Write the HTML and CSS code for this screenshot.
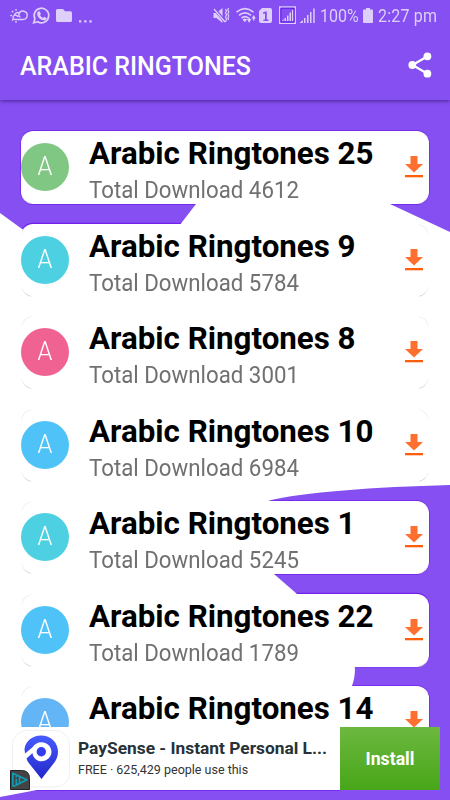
FILE: index.html
```html
<!DOCTYPE html>
<html lang="en">
<head>
<meta charset="utf-8">
<title>Arabic Ringtones</title>
<link rel="stylesheet" href="styles.css">
</head>
<body>
<svg class="symbols" width="0" height="0">
  <symbol id="download" viewBox="0 0 18 22"><path fill="#ff7030" d="M5.500 0h7v8H18l-9 8.500L0 8h5.500z"/><path fill="#ff5f0a" d="M0 19h18v2.300H0z"/></symbol>
</svg>
<div class="screen">
  <svg class="backdrop" viewBox="0 0 450 800">
    <g fill="none" stroke="#7420ec" stroke-width="1.300"><rect x="21" y="131" width="408" height="73" rx="12"/><rect x="21" y="223.500" width="408" height="73" rx="12"/><rect x="21" y="501" width="408" height="73" rx="12"/><rect x="21" y="593.500" width="408" height="73" rx="12"/><rect x="21" y="686" width="408" height="73" rx="12"/><path d="M30 790h310"/></g>
    <path fill="#fff" d="M0 213L22 229 60 257H153L181 223.500 196 204 220 174H330L390 204 450 232V485C375 487 302 492 268 501L240 540 274 574 297 594 340 630C353 648 359 667 352 686L340 740V789L37 790 0 797Z"/>
  </svg>
  <header class="top">
    <div class="status">
      <svg class="status-left" viewBox="0 0 100 32" fill="none" stroke="#ddcffa" stroke-width="1.400">
        <path d="M14.500 15.500a3 3 0 0 1 5-2.200M14.500 19.500h8.500a4.200 4.200 0 1 0-4-5.600c-.5 1.500 0 3 1.500 3.200M14.500 19.500a2.200 2.200 0 0 1 0-4.200c1.700-.5 3 .5 3.500 1.800"/>
        <path stroke-width="1.700" stroke-linecap="round" d="M11 15.500h.2M12.500 11.500l.1.100M16 9.800v.1M12.500 20l.1-.1M16 21.800v.1"/>
        <path stroke-width="1.700" d="M33.700 22.800l1.200-4A7.300 7.300 0 1 1 37.700 21.800z"/>
        <path fill="#ddcffa" stroke="none" d="M38.200 11.400l1.500-.2 1.200 2.700-.9 1.200c.7 1.400 1.600 2.200 3 2.800l1.100-1.200 2.500 1.200c0 2-1.500 2.800-3.200 2.400-3.300-.7-6.300-3.600-6.300-6.600 0-1 .4-1.800 1.100-2.300z"/>
        <path fill="#ddcffa" stroke="none" d="M57.500 9H63l2 2.300h5.500q1.500 0 1.500 1.500v7.700q0 1.500-1.500 1.500h-13q-1.500 0-1.500-1.500v-10Q56 9 57.500 9zM79 20.200h2.300v2.300H79zM84.200 20.200h2.300v2.300h-2.300zM89.400 20.200h2.300v2.300h-2.300z"/>
      </svg>
      <svg class="status-mid" viewBox="210 0 106 32" fill="#ddcffa">
        <path d="M213.500 13h3l6-5v15l-6-5h-3z"/><path d="M214 8.500l11 13" stroke="#854ff1" stroke-width="3"/><path d="M214 9l11 13" stroke="#ddcffa" stroke-width="1.300"/>
        <path fill="none" stroke="#ddcffa" stroke-width="1.200" d="M225.500 9l1 2-1 2 1 2-1 2 1 2-1 3M228.500 8l-.7 2 1 2-1 2 1 2-1 2 1 2"/>
        <path fill="none" stroke="#ddcffa" stroke-width="1.700" d="M236.500 12.200q8.500-7 17 0M239 15.400q6-5 12 0M241.500 18.200q3.500-3 7 0"/>
        <path d="M242.500 19.500q2.500-2 4.500 0l-2.200 2.700zM247 19h1.500v-1.500h1.300V19h1.500l-2.200 4zM251.500 18.500l2.200-3.500 2.200 3.500h-1.500v2h-1.400v-2z"/>
        <path fill-rule="evenodd" d="M262 8h8q2 0 2 2v11q0 2-2 2h-9q-2 0-2-2V11zM263.200 12.300v1.600l1.800-.3v6h-1.600v1.400h5v-1.400h-1.600v-8.200h-1.400z"/>
        <path fill="none" stroke="#ddcffa" stroke-width="1.300" d="M279.700 7h15.600v16.300h-15.600z"/><path fill="none" stroke="#6315ea" d="M280.900 8.200h13.200v13.900h-13.200z"/>
        <path d="M282 21h1.500v-2zM284.500 18h1.500v3h-1.500zM287 15.500h1.500V21H287zM289.500 12.500h1.500V21h-1.500zM292 10h1.200v11H292zM299.500 23h3.300v-3zM304 18h1.500v5H304zM307 15h1.500v8H307zM310 12h1.500v11H310zM313.200 8.500h1.500V23h-1.500z"/>
      </svg>
      <span class="percent">100%</span>
      <svg class="battery" viewBox="0 0 10 15"><path fill="#ddcffa" d="M3 0h4v1.500h2q1 0 1 1V14q0 1-1 1H1q-1 0-1-1V2.500q0-1 1-1h2z"/></svg>
      <span class="clock">2:27 pm</span>
    </div>
    <div class="bar">
      <h1>ARABIC RINGTONES</h1>
      <svg class="share" viewBox="0 0 24 26" fill="#fff"><path fill="none" stroke="#fff" stroke-width="2.200" d="M19.500 4.300L4.500 13l15 8.700"/><circle cx="19.400" cy="4.300" r="3.900"/><circle cx="4.300" cy="13" r="3.900"/><circle cx="19.400" cy="21.700" r="3.900"/></svg>
    </div>
  </header>
  <main class="list">
    <article class="card"><span class="avatar green"><i>A</i></span><div class="info"><h2>Arabic Ringtones 25</h2><p>Total Download 4612</p></div><svg class="download"><use href="#download"/></svg></article>
    <article class="card"><span class="avatar cyan"><i>A</i></span><div class="info"><h2>Arabic Ringtones 9</h2><p>Total Download 5784</p></div><svg class="download"><use href="#download"/></svg></article>
    <article class="card"><span class="avatar pink"><i>A</i></span><div class="info"><h2>Arabic Ringtones 8</h2><p>Total Download 3001</p></div><svg class="download"><use href="#download"/></svg></article>
    <article class="card"><span class="avatar sky"><i>A</i></span><div class="info"><h2>Arabic Ringtones 10</h2><p>Total Download 6984</p></div><svg class="download"><use href="#download"/></svg></article>
    <article class="card"><span class="avatar cyan"><i>A</i></span><div class="info"><h2>Arabic Ringtones 1</h2><p>Total Download 5245</p></div><svg class="download"><use href="#download"/></svg></article>
    <article class="card"><span class="avatar sky"><i>A</i></span><div class="info"><h2>Arabic Ringtones 22</h2><p>Total Download 1789</p></div><svg class="download"><use href="#download"/></svg></article>
    <article class="card"><span class="avatar blue"><i>A</i></span><div class="info"><h2>Arabic Ringtones 14</h2></div><svg class="download"><use href="#download"/></svg></article>
  </main>
  <aside class="ad">
    <svg class="ad-icon" viewBox="0 0 60 63">
      <defs><linearGradient id="pin" x2="0" y2="1"><stop stop-color="#465bff"/><stop offset="1" stop-color="#2427c9"/></linearGradient></defs>
      <rect x="2.500" y="3.500" width="57" height="56.500" rx="14" fill="#fff" stroke="#e9e9e9" stroke-width=".7"/>
      <path fill="url(#pin)" d="M14.500 22C15.500 14 22.500 8.500 31 8.500c10 0 17 7 17 16.500 0 6-3 10-6 13.500L31.500 52 20 37.500c-1.800-2-3-4-3.500-6L22.500 26c.5 5 4.500 8.300 9 8.300 5.500 0 10-4.300 10-9.500s-4.500-9.600-10-9.600c-4 0-7.200 2-9 5L15 26.500z"/>
      <circle cx="31.300" cy="24.800" r="4.700" fill="#343cf0"/>
      <path fill="#444" stroke="#222" d="M.5 43.500h11q8 0 8 8v11H.5z"/><path fill="none" stroke="#109cb4" stroke-width="1.600" stroke-linejoin="round" d="M2.800 46.300l14 6.500-12.300 6.200H2.800zM6.300 52v6M9.500 49.500v7.500"/><path fill="none" stroke="#109cb4" stroke-width="1.400" d="M6.300 49v1.500"/>
    </svg>
    <div class="ad-copy"><strong>PaySense - Instant Personal L...</strong><span>FREE · 625,429 people use this</span></div>
    <button class="install">Install</button>
  </aside>
</div>
</body>
</html>
```
FILE: styles.css
```css
* { box-sizing: border-box; }
body { margin: 0; font-family: Roboto, "Liberation Sans", sans-serif; }
h1, h2, p { margin: 0; white-space: nowrap; }
.symbols { position: absolute; }
.screen { position: relative; width: 450px; height: 800px; overflow: hidden; background: #854ff1; }
.backdrop { position: absolute; inset: 0; width: 450px; height: 800px; }
.top { position: relative; height: 100px; background: #854ff1; box-shadow: 0 1px 4px rgba(30, 0, 80, .6); }
.status { display: flex; height: 32px; color: #ddcffa; font-size: 18px; line-height: 32px; white-space: nowrap; }
.status-left { width: 100px; height: 32px; margin-right: 110px; flex: none; }
.status-mid { width: 106px; height: 32px; flex: none; }
.percent, .clock { display: block; transform-origin: left center; transform: scaleX(.89); }
.percent { width: 43px; margin-left: 4px; }
.battery { width: 10px; height: 15px; margin: 8px 5px 0 0; flex: none; }
.clock { letter-spacing: .2px; }
.bar { display: flex; align-items: center; justify-content: space-between; height: 68px; padding: 0 18px 0 20px; }
h1 { color: #fff; font-size: 25px; font-weight: 500; }
.share { width: 24px; height: 26px; margin-top: -2px; }
.list { position: relative; display: flex; flex-direction: column; gap: 19.500px; padding: 31px 21px 0; }
.card { position: relative; display: flex; flex: none; height: 73px; border-radius: 12px; background: #fff; }
.card::after {
  content: "";
  position: absolute;
  inset: 0;
  border: 1px solid rgba(0, 0, 0, .07);
  border-bottom-color: rgba(0, 0, 0, .16);
  border-radius: 12px;
  mask: linear-gradient(90deg, #000 9px, transparent 11px, transparent calc(100% - 11px), #000 calc(100% - 9px)), linear-gradient(#000 9px, transparent 11px, transparent calc(100% - 11px), #000 calc(100% - 9px));
  mask-composite: intersect;
}
.avatar { width: 48px; height: 48px; margin-top: 12.400px; border-radius: 50%; color: #fff; font-size: 25px; font-weight: 300; line-height: 48px; text-align: center; flex: none; }
.avatar i { display: block; font-style: normal; transform: scaleX(.95); }
.green { background: #81c784; }
.cyan { background: #4dd0e1; }
.pink { background: #f06292; }
.sky { background: #4fc3f7; }
.blue { background: #64b5f6; }
.info { width: 336px; padding: .4px 0 0 20px; flex: none; }
h2 { height: 45px; font-size: 31.300px; font-weight: 700; line-height: 46px; }
.info p { color: #707070; font-size: 23px; line-height: 29px; transform: scaleX(.968); transform-origin: left center; }
.download { width: 18px; height: 22px; margin: 25px 0 0; overflow: visible; flex: none; }
.ad { position: absolute; left: 10px; top: 727px; display: flex; width: 430px; height: 63px; background: #fff; }
.ad-icon { width: 60px; height: 63px; flex: none; }
.ad-copy { display: flex; flex-direction: column; width: 270px; padding: 10px 0 0 8px; white-space: nowrap; }
.ad-copy strong { color: #263238; font-size: 17.350px; font-weight: 700; line-height: 22px; }
.ad-copy span { color: #333; font-size: 12.500px; line-height: 21px; }
.install { width: 100px; height: 63px; padding: 0; border: 0; background: linear-gradient(#6cb83f, #48a619); color: #fff; font: 700 17.700px Roboto, sans-serif; }
```
